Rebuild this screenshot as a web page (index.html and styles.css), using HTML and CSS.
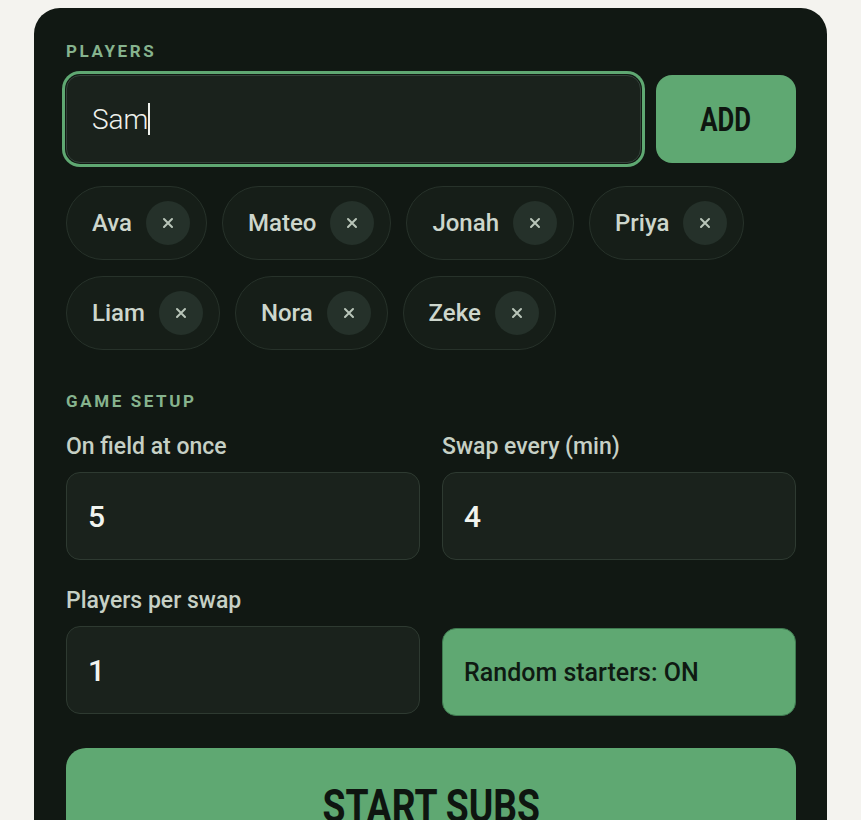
FILE: index.html
```html
<!DOCTYPE html>
<html lang="en">
<head>
<meta charset="utf-8">
<title>Subs</title>
<link rel="stylesheet" href="styles.css">
</head>
<body>
<main class="card">
  <h2 class="section-label">Players</h2>
  <div class="add-row">
    <div class="name-input"><span class="name-value">Sam</span><span class="caret"></span></div>
    <button class="add-btn"><span class="cond">ADD</span></button>
  </div>
  <ul class="chips">
    <li class="chip"><span class="chip-name">Ava</span><span class="chip-x"><svg viewBox="0 0 12 12"><path d="M2 2L10 10M10 2L2 10"/></svg></span></li>
    <li class="chip"><span class="chip-name">Mateo</span><span class="chip-x"><svg viewBox="0 0 12 12"><path d="M2 2L10 10M10 2L2 10"/></svg></span></li>
    <li class="chip"><span class="chip-name">Jonah</span><span class="chip-x"><svg viewBox="0 0 12 12"><path d="M2 2L10 10M10 2L2 10"/></svg></span></li>
    <li class="chip"><span class="chip-name">Priya</span><span class="chip-x"><svg viewBox="0 0 12 12"><path d="M2 2L10 10M10 2L2 10"/></svg></span></li>
    <li class="chip"><span class="chip-name">Liam</span><span class="chip-x"><svg viewBox="0 0 12 12"><path d="M2 2L10 10M10 2L2 10"/></svg></span></li>
    <li class="chip"><span class="chip-name">Nora</span><span class="chip-x"><svg viewBox="0 0 12 12"><path d="M2 2L10 10M10 2L2 10"/></svg></span></li>
    <li class="chip"><span class="chip-name">Zeke</span><span class="chip-x"><svg viewBox="0 0 12 12"><path d="M2 2L10 10M10 2L2 10"/></svg></span></li>
  </ul>

  <h2 class="section-label setup-label">Game setup</h2>
  <div class="setup-grid">
    <div class="field">
      <label class="field-label">On field at once</label>
      <div class="num-input">5</div>
    </div>
    <div class="field">
      <label class="field-label">Swap every (min)</label>
      <div class="num-input">4</div>
    </div>
    <div class="field">
      <label class="field-label">Players per swap</label>
      <div class="num-input">1</div>
    </div>
    <button class="toggle-btn">Random starters: ON</button>
  </div>

  <button class="start-btn"><span class="cond cond-wide">START SUBS</span></button>
</main>
</body>
</html>
```
FILE: styles.css
```css
* { box-sizing: border-box; }

body {
  margin: 8px;
  background: #f4f3ef;
  font-family: Roboto, "Noto Sans", sans-serif;
}

.card {
  margin: 0 26px;
  background: #111813;
  border-radius: 26px;
  padding: 32px 31px 40px 32px;
}

.section-label {
  margin: 0 0 13px;
  font-size: 17px;
  line-height: 22px;
  font-weight: 700;
  letter-spacing: 2.6px;
  text-transform: uppercase;
  color: #86b38e;
}

.add-row {
  display: flex;
  gap: 15px;
  align-items: center;
}

.name-input {
  flex: 1;
  height: 88px;
  display: flex;
  align-items: center;
  padding-left: 25px;
  background: #1a221c;
  border: 1px solid #34423a;
  border-radius: 14px;
  box-shadow: 0 0 0 1px #111813, 0 0 0 4px #5fa872;
}

.name-value {
  font-size: 28px;
  font-weight: 300;
  color: #eef1ec;
}

.caret {
  display: inline-block;
  width: 2px;
  height: 32px;
  background: #eef1ec;
}

.cond {
  display: inline-block;
  transform: scaleX(0.78);
}

.cond-wide {
  transform: scaleX(0.81);
}

.add-btn {
  width: 140px;
  height: 88px;
  border: none;
  border-radius: 16px;
  background: #5fa872;
  color: #0e1510;
  font-family: Roboto, "Noto Sans", sans-serif;
  font-weight: 700;
  font-size: 33px;
}

.chips {
  list-style: none;
  margin: 23px 0 0;
  padding: 0;
  display: flex;
  flex-wrap: wrap;
  gap: 16px 15px;
  max-width: 700px;
}

.chip {
  display: flex;
  align-items: center;
  height: 74px;
  padding: 0 16px 0 25px;
  gap: 14px;
  background: #161e18;
  border: 1px solid #27322a;
  border-radius: 37px;
}

.chip-name {
  font-size: 24px;
  font-weight: 500;
  color: #cdd6cc;
}

.chip-x {
  width: 44px;
  height: 44px;
  border-radius: 50%;
  background: #25312a;
  display: flex;
  align-items: center;
  justify-content: center;
}

.chip-x svg {
  width: 12px;
  height: 12px;
  stroke: #b9c5b9;
  stroke-width: 2;
  fill: none;
  stroke-linecap: round;
}

.setup-label {
  margin: 40px 0 21px;
}

.setup-grid {
  display: grid;
  grid-template-columns: 1fr 1fr;
  column-gap: 22px;
  row-gap: 27px;
}

.field {
  display: flex;
  flex-direction: column;
  gap: 12px;
}

.field-label {
  font-size: 23px;
  line-height: 27px;
  font-weight: 500;
  color: #c6d0c5;
}

.num-input {
  height: 88px;
  display: flex;
  align-items: center;
  padding-left: 21px;
  background: #1a221c;
  border: 1px solid #2e3a31;
  border-radius: 14px;
  font-size: 30px;
  font-weight: 500;
  color: #f1f4ef;
}

.toggle-btn {
  align-self: end;
  height: 88px;
  margin-bottom: -2px;
  text-align: left;
  padding-left: 21px;
  background: #5fa872;
  border: 1px solid #3f7a50;
  border-radius: 14px;
  font-family: Roboto, "Noto Sans", sans-serif;
  font-size: 25px;
  font-weight: 500;
  color: #0f1a12;
}

.start-btn {
  display: block;
  width: 100%;
  margin-top: 34px;
  height: 116px;
  border: none;
  border-radius: 20px;
  background: #5fa872;
  color: #0e1510;
  font-family: Roboto, "Noto Sans", sans-serif;
  font-weight: 700;
  font-size: 46px;
}
```
